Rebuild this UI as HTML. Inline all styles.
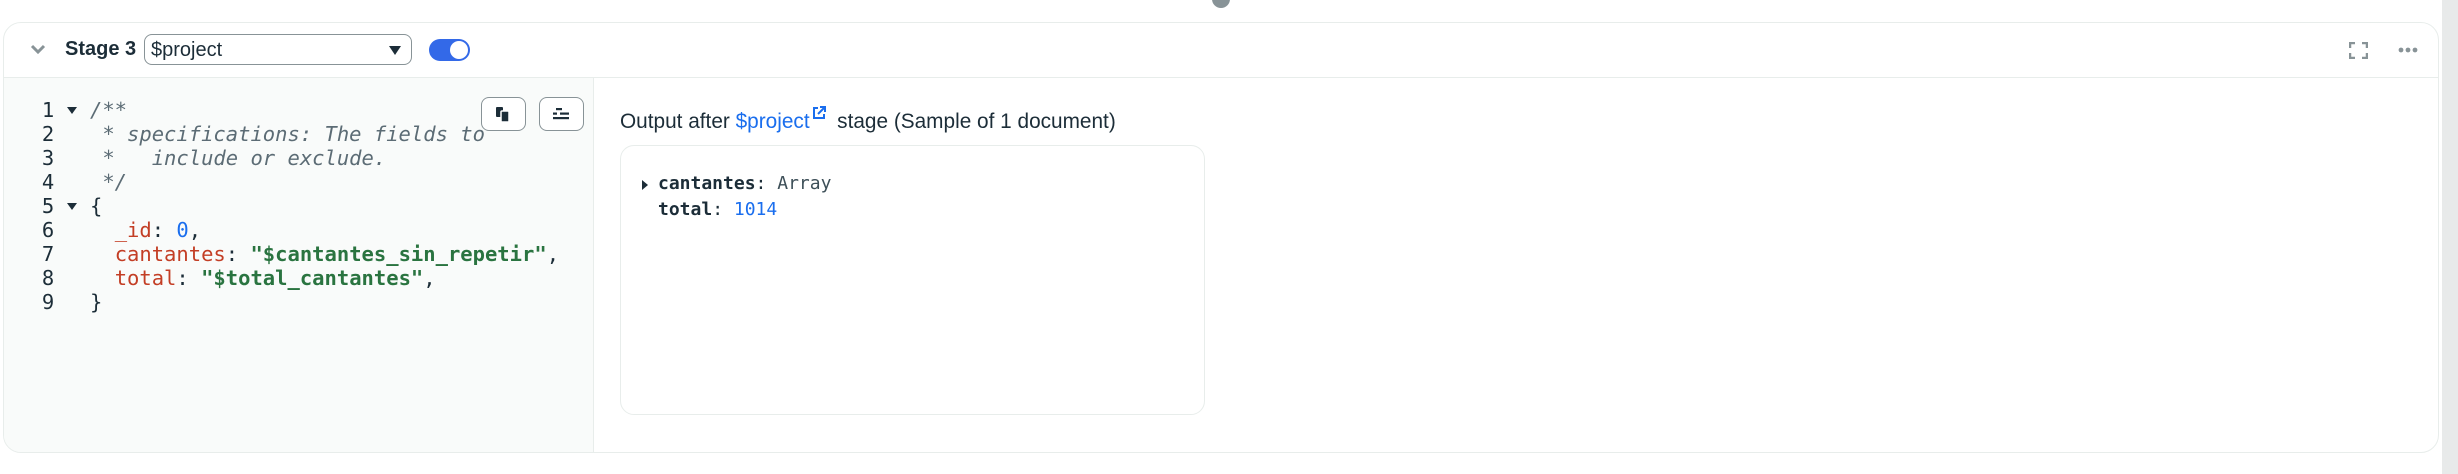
<!DOCTYPE html>
<html><head><meta charset="utf-8"><style>
*{box-sizing:border-box;margin:0;padding:0}
body{width:2458px;height:474px;background:#fff;position:relative;overflow:hidden;font-family:"Liberation Sans",sans-serif;color:#1c2d38}
.abs{position:absolute;white-space:nowrap}
.card{left:3px;top:22px;width:2436px;height:431px;border:1.5px solid #e8edeb;border-radius:18px;overflow:hidden;background:#fff}
.hdr{left:0;top:0;width:100%;height:55px;border-bottom:1.5px solid #e8edeb}
.ed{left:0;top:55px;width:590px;height:376px;background:#f9fbfa;border-right:1.5px solid #e8edeb}
.mono{font-family:"DejaVu Sans Mono","Liberation Mono",monospace;font-size:20.5px;line-height:24px}
.ln{position:absolute;left:37px;width:14px;text-align:center;color:#1c2d38}
.cd{position:absolute;left:86px;white-space:pre}
.cm{color:#5c6c75;font-style:italic}
.k{color:#c33e25}.s{color:#2a7440;font-weight:bold}.n{color:#1a6eee}
.fold{position:absolute;left:63px;width:0;height:0;border-left:5px solid transparent;border-right:5px solid transparent;border-top:7px solid #1c2d38}
.btn{top:74px;width:45px;height:34px;border:1.5px solid #889397;border-radius:8px;background:#fff}
</style></head><body>
<div class="abs" style="left:1212px;top:-10px;width:18px;height:18px;border-radius:50%;background:#889397"></div>
<div class="abs" style="left:2442px;top:0;width:16px;height:474px;background:#e8eaea"></div>
<div class="abs card">
 <div class="abs hdr">
  <svg class="abs" style="left:26px;top:21px" width="16" height="12" viewBox="0 0 16 12"><path d="M2 2l6 6 6-6" stroke="#889397" stroke-width="3" fill="none"/></svg>
  <div class="abs" style="left:61px;top:15px;font-size:20px;font-weight:bold;color:#1c2d38">Stage 3</div>
  <div class="abs" style="left:140px;top:11px;width:268px;height:31px;border:1.5px solid #889397;border-radius:8px;background:#fff">
   <div class="abs" style="left:6px;top:4px;font-size:20px;color:#1c2d38">$project</div>
   <div class="abs" style="left:244px;top:11px;border-left:6px solid transparent;border-right:6px solid transparent;border-top:9px solid #1c2d38"></div>
  </div>
  <div class="abs" style="left:425px;top:16px;width:41px;height:22px;border-radius:11px;background:#3369e8"><div class="abs" style="left:21px;top:2px;width:18px;height:18px;border-radius:50%;background:#fff"></div></div>
  <svg class="abs" style="left:2345px;top:19px" width="19" height="17" viewBox="0 0 19 17" fill="none" stroke="#889397" stroke-width="2.5"><path d="M1 6V1h5M13 1h5v5M18 11v5h-5M6 16H1v-5"/></svg>
  <svg class="abs" style="left:2394px;top:24px" width="20" height="6"><circle cx="3" cy="3" r="2.4" fill="#889397"/><circle cx="10" cy="3" r="2.4" fill="#889397"/><circle cx="17" cy="3" r="2.4" fill="#889397"/></svg>
 </div>
 <div class="abs ed mono">
  <div class="ln" style="top:20px">1</div><div class="fold" style="top:29px"></div><div class="cd cm" style="top:20px">/**</div>
  <div class="ln" style="top:44px">2</div><div class="cd cm" style="top:44px"> * specifications: The fields to</div>
  <div class="ln" style="top:68px">3</div><div class="cd cm" style="top:68px"> *   include or exclude.</div>
  <div class="ln" style="top:92px">4</div><div class="cd cm" style="top:92px"> */</div>
  <div class="ln" style="top:116px">5</div><div class="fold" style="top:125px"></div><div class="cd" style="top:116px">{</div>
  <div class="ln" style="top:140px">6</div><div class="cd" style="top:140px">  <span class="k">_id</span>: <span class="n">0</span>,</div>
  <div class="ln" style="top:164px">7</div><div class="cd" style="top:164px">  <span class="k">cantantes</span>: <span class="s">"$cantantes_sin_repetir"</span>,</div>
  <div class="ln" style="top:188px">8</div><div class="cd" style="top:188px">  <span class="k">total</span>: <span class="s">"$total_cantantes"</span>,</div>
  <div class="ln" style="top:212px">9</div><div class="cd" style="top:212px">}</div>
 </div>
 <div class="abs btn" style="left:477px"><svg class="abs" style="left:13px;top:8px" width="16" height="17" viewBox="0 0 16 17" fill="#1c2d38"><rect x="1" y="1" width="7" height="10" rx="1"/><rect x="6" y="5" width="8" height="11" rx="1" stroke="#fff" stroke-width="1.5"/></svg></div>
 <div class="abs btn" style="left:535px"><svg class="abs" style="left:13px;top:9px" width="16" height="14" viewBox="0 0 16 14" fill="#1c2d38"><rect x="3" y="1" width="6" height="2.2"/><rect x="0" y="5.5" width="4" height="2.2"/><rect x="7" y="5.5" width="9" height="2.2"/><rect x="0" y="10" width="16" height="2.2"/></svg></div>
 <div class="abs" style="left:616px;top:83px;font-size:20.8px;color:#1c2d38">Output after <span style="color:#1a6eee">$project</span><svg width="14" height="14" viewBox="0 0 14 14" style="vertical-align:8px;margin-left:2px" fill="none" stroke="#1a6eee" stroke-width="2"><path d="M6 2H2v10h10V8M8 1h5v5M13 1L6 8"/></svg> &nbsp;stage (Sample of 1 document)</div>
 <div class="abs" style="left:616px;top:122px;width:585px;height:270px;border:1.5px solid #e8edeb;border-radius:14px;background:#fff">
  <div class="abs" style="left:21px;top:34px;border-top:5px solid transparent;border-bottom:5px solid transparent;border-left:6px solid #1c2d38"></div>
  <div class="abs mono" style="left:37px;top:27px;font-size:18px;line-height:22px;color:#1c2d38;white-space:pre"><b>cantantes</b>: <span style="color:#3d4f58">Array</span></div>
  <div class="abs mono" style="left:37px;top:53px;font-size:18px;line-height:22px;color:#1c2d38;white-space:pre"><b>total</b>: <span class="n">1014</span></div>
 </div>
</div>
</body></html>
